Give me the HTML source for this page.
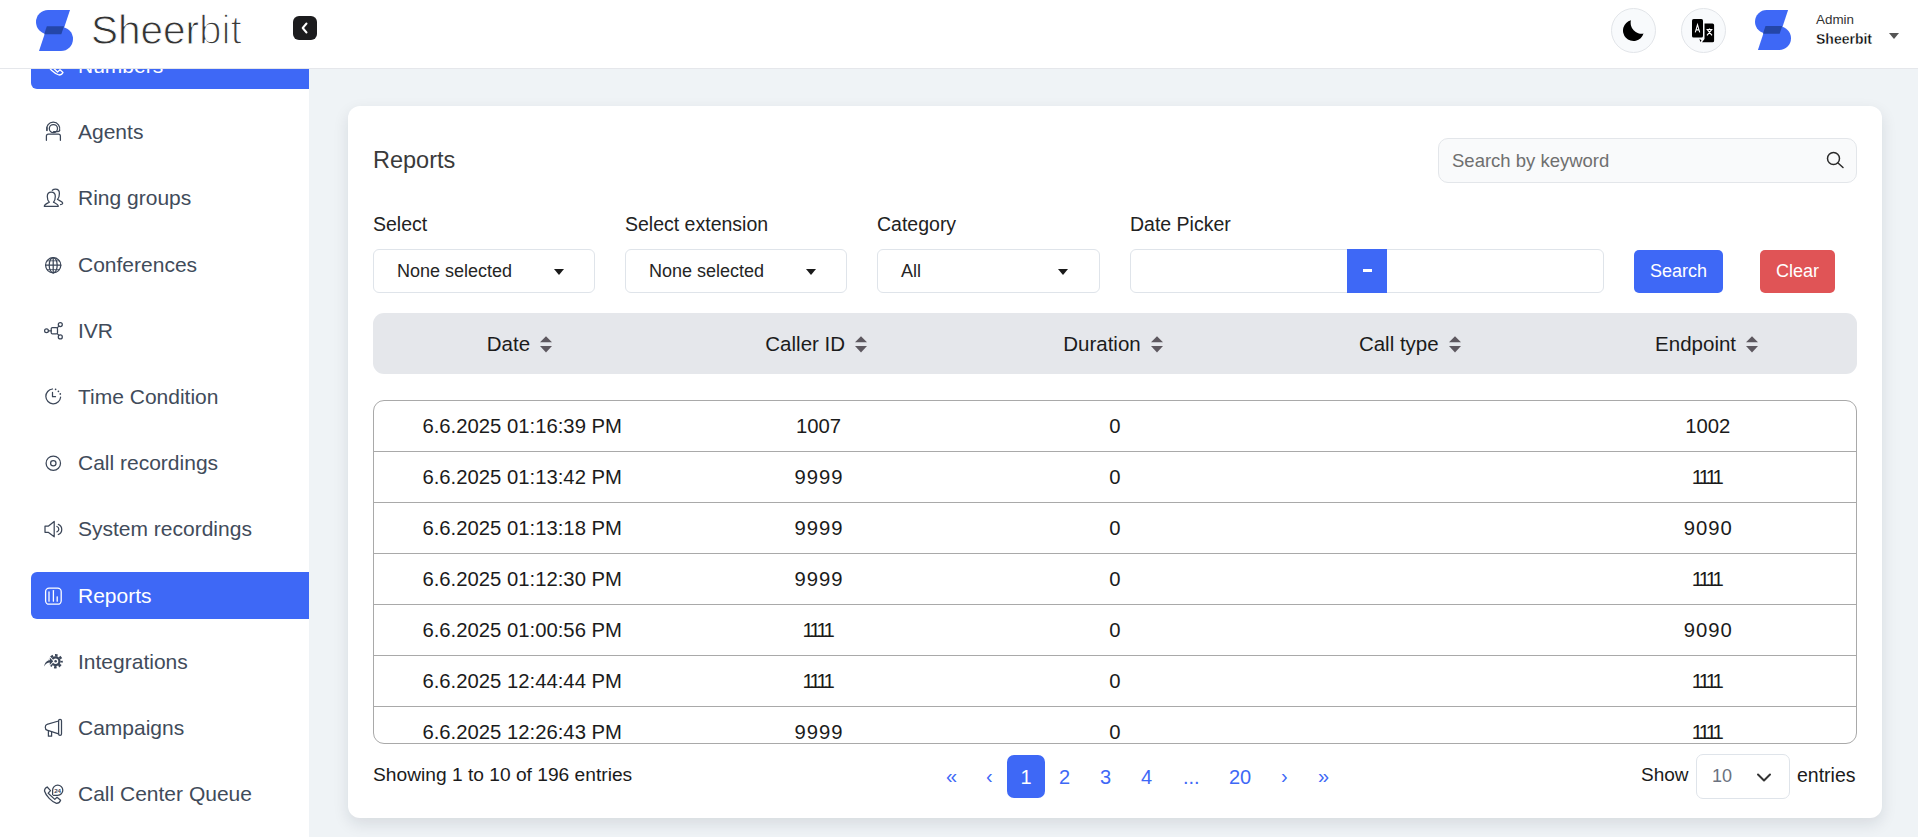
<!DOCTYPE html>
<html>
<head>
<meta charset="utf-8">
<style>
*{box-sizing:border-box;margin:0;padding:0}
html,body{width:1918px;height:837px;overflow:hidden}
body{background:#eff3f6;font-family:"Liberation Sans",sans-serif;position:relative;color:#1f1f1f}
.abs{position:absolute}
.t{position:absolute;white-space:pre;line-height:20px}
#hdr{position:absolute;left:0;top:0;width:1918px;height:69px;background:#fff;border-bottom:1px solid #e5e7eb;z-index:5}
#side{position:absolute;left:0;top:0;width:309px;height:837px;background:#fff;overflow:hidden}
.mi{position:absolute;left:31px;width:278px;height:47px;border-radius:6px 0 0 6px}
.mi.act{background:#3e68f6}
.mi .lbl{position:absolute;left:47px;top:0;line-height:47px;font-size:21px;color:#414b5a;white-space:pre}
.mi.act .lbl{color:#fff}
.mi svg{position:absolute}
#card{position:absolute;left:348px;top:106px;width:1534px;height:712px;background:#fff;border-radius:12px;box-shadow:0 6px 16px rgba(20,30,50,.11)}
.inp{position:absolute;border:1px solid #dfe4ea;border-radius:6px;background:#fff}
.lab{position:absolute;font-size:19.5px;line-height:20px;color:#222;white-space:pre}
.sel .v{position:absolute;left:23px;top:0;line-height:42px;font-size:18px;color:#252525;white-space:pre}
.sel .car{position:absolute;left:180px;top:19px;width:0;height:0;border-left:5.5px solid transparent;border-right:5.5px solid transparent;border-top:6px solid #1a1a1a}
.btn{position:absolute;top:250px;height:43px;border-radius:5px;color:#fff;font-size:18px;line-height:43px;text-align:center}
#thead{position:absolute;left:373px;top:313px;width:1484px;height:61px;background:#e5e7eb;border-radius:11px}
.th{position:absolute;top:0;margin-left:-2px;width:296.8px;height:61px;display:flex;align-items:center;justify-content:center;font-size:20.5px;color:#1b1b1b}
.th svg{margin-left:10px;width:12px;height:17px;margin-top:1px}
#tbody{position:absolute;left:373px;top:400px;width:1484px;height:344px;border:1px solid #a9a9a9;border-radius:11px;overflow:hidden}
.tr{position:absolute;left:0;width:1482px;height:51px;border-bottom:1px solid #a9a9a9}
.td{position:absolute;top:0;width:296.4px;line-height:50px;text-align:center;font-size:20.3px;color:#1b1b1b;white-space:pre}
.pg{position:absolute;top:755px;height:43px;line-height:43px;font-size:20px;color:#3e68f6;text-align:center}
</style>
</head>
<body>
<div id="hdr">
  <svg class="abs" style="left:34px;top:8px" width="42" height="46" viewBox="34 8 42 46">
    <path fill="#3e68f6" d="M48,10 H70 L62,34 H48 A12,12 0 0 1 48,10 Z"/>
    <path fill="#3e68f6" d="M39,51 L47,27 H61 A12,12 0 0 1 61,51 Z"/>
    <path fill="#2446a8" d="M46.8,26.3 H64 L61.3,34.3 H44.2 Z"/>
  </svg>
  <div class="t" style="left:91px;top:10px;line-height:40px;font-size:40.5px;color:#333;-webkit-text-stroke:0.9px #fff">Sheer<span style="color:#3a3a3a;-webkit-text-stroke:1.4px #fff">bit</span></div>
  <div class="abs" style="left:293px;top:16px;width:24px;height:24px;border-radius:6px;background:#1c1c1e"></div>
  <svg class="abs" style="left:298px;top:20px" width="14" height="16" viewBox="0 0 14 16" fill="none" stroke="#fff" stroke-width="2" stroke-linecap="round" stroke-linejoin="round"><path d="M8.5 3.5l-3.8 4.5l3.8 4.5"/></svg>
  <div class="abs" style="left:1611px;top:8px;width:45px;height:45px;border-radius:50%;background:#f8fafc;border:1px solid #e2e5e9"></div>
  <svg class="abs" style="left:1621px;top:18px" width="26" height="26" viewBox="0 0 26 26"><path fill="#000" d="M9.93 2.32A10.5 10.5 0 1 0 22.53 15.61A10.98 10.98 0 0 1 9.93 2.32Z"/></svg>
  <div class="abs" style="left:1681px;top:8px;width:45px;height:45px;border-radius:50%;background:#f8fafc;border:1px solid #e2e5e9"></div>
  <svg class="abs" style="left:1691px;top:18px" width="26" height="26" viewBox="0 0 26 26">
    <rect x="1" y="1" width="11" height="18.5" rx="1.6" fill="#000"/>
    <path d="M13.5 5.5h8a1.6 1.6 0 0 1 1.6 1.6v15.6a1.6 1.6 0 0 1 -1.6 1.6h-10.5l2.5-3.3z" fill="#000"/>
    <path d="M8.5 20.8l2 1.8l-1.3 1.5z" fill="#000"/>
    <path d="M4.3 14.3l2.2-7.6l2.2 7.6M5 11.9h3" stroke="#fff" stroke-width="1.1" fill="none"/>
    <path d="M15.5 11.5h6M18.5 10.5v1.2M16.5 11.8l4.5 5.5M20.5 11.8l-4.5 5.5" stroke="#fff" stroke-width="1.2" fill="none"/>
  </svg>
  <svg class="abs" style="left:1755px;top:10px" width="36" height="40" viewBox="36 10 37 41">
    <path fill="#3e68f6" d="M48,10 H70 L62,34 H48 A12,12 0 0 1 48,10 Z"/>
    <path fill="#3e68f6" d="M39,51 L47,27 H61 A12,12 0 0 1 61,51 Z"/>
    <path fill="#2446a8" d="M46.8,26.3 H64 L61.3,34.3 H44.2 Z"/>
  </svg>
  <div class="t" style="left:1816px;top:9.5px;font-size:13.4px;color:#333">Admin</div>
  <div class="t" style="left:1816px;top:28.5px;font-size:14px;font-weight:700;color:#000;-webkit-text-stroke:0.35px #fff">Sheerbit</div>
  <div class="abs" style="left:1889px;top:33px;width:0;height:0;border-left:5.5px solid transparent;border-right:5.5px solid transparent;border-top:6px solid #555"></div>
</div>
<div id="side">
<div class="mi act" style="top:42.0px"><svg viewBox="0 0 24 24" style="left:10px;top:11.0px;width:24px;height:24px"><g fill="none" stroke="#fff" stroke-width="1.3" stroke-linecap="round" stroke-linejoin="round"><path d="M8.5 6 L12 9.6 L9.5 12.2 L16.5 19 L19 16.8 L22 19.5 C21.3 21 20 22 18 22 C13 20.5 7 15 5.5 10 C5.4 8.5 6.5 6.8 8.5 6 Z"/></g></svg><div class="lbl">Numbers</div></div>
<div class="mi" style="top:108.2px"><svg viewBox="0 0 24 24" style="left:10px;top:11.0px;width:24px;height:24px"><g fill="none" stroke="#3b4658" stroke-width="1.25" stroke-linecap="round" stroke-linejoin="round"><circle cx="12.4" cy="9.6" r="4.1"/><path d="M5.8 11.3 A6.6 6.6 0 1 1 18.6 11.5"/><path d="M18.6 11.5 C18.3 12.4 17.5 12.6 16.4 12.6 H12.6"/><path d="M6 11.5 v-2.8"/><path d="M5.4 21.3 V17.2 A2 2 0 0 1 7.4 15.2 H17.4 A2 2 0 0 1 19.4 17.2 V21.3"/></g></svg><div class="lbl">Agents</div></div>
<div class="mi" style="top:174.4px"><svg viewBox="0 0 24 24" style="left:10px;top:11.0px;width:24px;height:24px"><g fill="none" stroke="#3b4658" stroke-width="1.25" stroke-linecap="round" stroke-linejoin="round"><path d="M3.3 21.3 C3.3 19.5 6 18.5 8.3 17.2 C6.8 15.8 6.3 13.5 6.3 11.5 C6.3 8.8 8 7.2 10.3 7.2 C12.8 7.2 14.3 9 14.3 11.5 C14.3 13.5 13.8 15.8 12.5 17.2 C15 18.5 17.3 19.5 17.3 21.3 Z"/><path d="M11.3 5.3 C12.2 4.5 13.4 4.2 14.6 4.2 C17 4.2 18.4 6 18.4 8.5 C18.4 11 17.8 13.3 16.5 14.5 C19 15.8 21.7 16.5 21.7 18.3 C21.7 19 20.5 19.5 19.5 19.5"/></g></svg><div class="lbl">Ring groups</div></div>
<div class="mi" style="top:240.6px"><svg viewBox="0 0 24 24" style="left:10px;top:11.0px;width:24px;height:24px"><g fill="none" stroke="#3b4658" stroke-width="1.25" stroke-linecap="round" stroke-linejoin="round"><circle cx="12.2" cy="13.2" r="7.6"/><path d="M4.6 13.2 H19.8"/><path d="M12.2 5.6 V20.8"/><ellipse cx="12.2" cy="13.2" rx="4" ry="7.6"/><path d="M6 8.8 H18.4 M6 17.6 H18.4" stroke-width="0.8"/></g></svg><div class="lbl">Conferences</div></div>
<div class="mi" style="top:306.8px"><svg viewBox="0 0 24 24" style="left:10px;top:11.0px;width:24px;height:24px"><g fill="none" stroke="#3b4658" stroke-width="1.25" stroke-linecap="round" stroke-linejoin="round" stroke-width="1.4"><circle cx="5.5" cy="12.8" r="1.9"/><rect x="10.2" y="9.6" width="6.3" height="6.3" rx="1.2"/><circle cx="19.3" cy="6.5" r="2"/><circle cx="19.3" cy="18.9" r="2"/><path d="M7.4 12.8 H10.2"/><path d="M16.5 9.6 L17.8 8.1"/><path d="M16.5 15.9 L17.8 17.3"/></g></svg><div class="lbl">IVR</div></div>
<div class="mi" style="top:373.0px"><svg viewBox="0 0 24 24" style="left:10px;top:11.0px;width:24px;height:24px"><g fill="none" stroke="#3b4658" stroke-width="1.25" stroke-linecap="round" stroke-linejoin="round" stroke-width="1.35"><path d="M11.5 5 A7.4 7.4 0 1 0 19.6 13.2"/><path d="M14.6 5.3 v.01 M17.4 7.3 v.01 M19.3 9.9 v.01" stroke-width="1.7"/><path d="M11.5 8.4 V12.7 H14.5"/></g></svg><div class="lbl">Time Condition</div></div>
<div class="mi" style="top:439.2px"><svg viewBox="0 0 24 24" style="left:10px;top:11.0px;width:24px;height:24px"><g fill="none" stroke="#3b4658" stroke-width="1.25" stroke-linecap="round" stroke-linejoin="round"><circle cx="12.3" cy="13.2" r="7.2"/><circle cx="12.3" cy="13.2" r="2.7"/></g></svg><div class="lbl">Call recordings</div></div>
<div class="mi" style="top:505.4px"><svg viewBox="0 0 24 24" style="left:10px;top:11.0px;width:24px;height:24px"><g fill="none" stroke="#3b4658" stroke-width="1.25" stroke-linecap="round" stroke-linejoin="round"><path d="M4 10.2 H7.2 L13.2 5.4 V20.8 L7.2 16.3 H4 Z"/><path d="M15.9 10.5 A2.8 2.8 0 0 1 15.9 15.8"/><path d="M17.3 8.3 A5.5 5.5 0 0 1 17.3 18.5"/></g></svg><div class="lbl">System recordings</div></div>
<div class="mi act" style="top:571.6px"><svg viewBox="0 0 24 24" style="left:10px;top:11.0px;width:24px;height:24px"><g fill="none" stroke="#fff" stroke-width="1.3" stroke-linecap="round" stroke-linejoin="round"><rect x="4.6" y="5.2" width="15.6" height="16" rx="3.5"/><path d="M8 8.9 V18.2"/><path d="M12.4 7.6 V18.2"/><path d="M16.2 13.8 V18.2"/></g></svg><div class="lbl">Reports</div></div>
<div class="mi" style="top:637.8px"><svg viewBox="0 0 24 24" style="left:10px;top:11.0px;width:24px;height:24px"><g><circle cx="14.6" cy="12.2" r="3.85" fill="none" stroke="#3b4658" stroke-width="2.3"/><circle cx="14.6" cy="12.2" r="6" fill="none" stroke="#3b4658" stroke-width="2.4" stroke-dasharray="2.6 2.112" stroke-dashoffset="1.3"/><circle cx="14.6" cy="12.2" r="1.3" fill="#3b4658"/><path d="M3 17.5 C3.8 13.5 6 11.2 8.8 11.2 V8.6 L12.2 12.3 L8.8 16 V13.6 C6.5 13.6 4.5 15 3 17.5 Z" fill="#3b4658" stroke="#fff" stroke-width="1.8" paint-order="stroke"/></g></svg><div class="lbl">Integrations</div></div>
<div class="mi" style="top:704.0px"><svg viewBox="0 0 24 24" style="left:10px;top:11.0px;width:24px;height:24px"><g fill="none" stroke="#3b4658" stroke-width="1.25" stroke-linecap="round" stroke-linejoin="round"><path d="M17.6 6 L6 9.3 C4.8 9.6 4.3 10.8 4.3 12.3 C4.3 13.8 4.8 14.9 6 15.2 L17.6 18.8"/><rect x="17.6" y="4.4" width="2.9" height="16" rx="1.4"/><path d="M7.4 15.8 V21.2 H10.6 V16.8"/></g></svg><div class="lbl">Campaigns</div></div>
<div class="mi" style="top:770.2px"><svg viewBox="0 0 24 24" style="left:10px;top:11.0px;width:24px;height:24px"><g fill="none" stroke="#3b4658" stroke-width="1.25" stroke-linecap="round" stroke-linejoin="round"><path d="M6.2 6 L9.5 9.6 L7.2 12.2 L13.8 18.4 L16 16.3 L19.6 19.3 C19 21 17.6 22.4 15.5 22.4 C10.5 20.5 5 15 3.5 10 C3.4 8.5 4.5 6.8 6.2 6 Z"/><path d="M11.6 13.5 V9.2 A5.1 5.1 0 1 1 16.7 14.3 H12.5"/><text x="16.6" y="11.6" font-size="6.2" font-family="Liberation Sans" font-weight="700" text-anchor="middle" fill="#3b4658" stroke="none">24</text></g></svg><div class="lbl">Call Center Queue</div></div>
</div>
<div id="card"></div>

<div class="t" style="left:373px;top:150px;font-size:23.5px;color:#3a3a3a">Reports</div>
<div class="inp" style="left:1438px;top:138px;width:419px;height:45px;border-radius:10px;background:#f9fafb;border-color:#e3e6ea"></div>
<div class="t" style="left:1452px;top:151px;font-size:18.5px;color:#6f6f6f">Search by keyword</div>
<svg class="abs" style="left:1825px;top:150px" width="20" height="20" viewBox="0 0 20 20" fill="none" stroke="#2a2a2a" stroke-width="1.5" stroke-linecap="round"><circle cx="8.5" cy="8.5" r="6"/><path d="M13 13l5 4.5"/></svg>

<div class="lab" style="left:373px;top:214px">Select</div>
<div class="lab" style="left:625px;top:214px">Select extension</div>
<div class="lab" style="left:877px;top:214px">Category</div>
<div class="lab" style="left:1130px;top:214px">Date Picker</div>

<div class="inp sel" style="left:373px;top:249px;width:222px;height:44px"><div class="v">None selected</div><div class="car"></div></div>
<div class="inp sel" style="left:625px;top:249px;width:222px;height:44px"><div class="v">None selected</div><div class="car"></div></div>
<div class="inp sel" style="left:877px;top:249px;width:223px;height:44px"><div class="v">All</div><div class="car"></div></div>

<div class="inp" style="left:1130px;top:249px;width:474px;height:44px"></div>
<div class="abs" style="left:1347px;top:249px;width:40px;height:44px;background:#3e68f6"></div>
<div class="abs" style="left:1362.5px;top:269px;width:9px;height:3px;background:#fff"></div>

<div class="btn" style="left:1634px;width:89px;background:#3e68f6">Search</div>
<div class="btn" style="left:1760px;width:75px;background:#e05456">Clear</div>

<div id="thead"><div class="th" style="left:0.0px">Date<svg viewBox="0 0 12 17"><path d="M6 0.2L12 6.3H0z" fill="#5d585f"/><path d="M0 10H12L6 16.5z" fill="#5d585f"/></svg></div><div class="th" style="left:296.8px">Caller ID<svg viewBox="0 0 12 17"><path d="M6 0.2L12 6.3H0z" fill="#5d585f"/><path d="M0 10H12L6 16.5z" fill="#5d585f"/></svg></div><div class="th" style="left:593.6px">Duration<svg viewBox="0 0 12 17"><path d="M6 0.2L12 6.3H0z" fill="#5d585f"/><path d="M0 10H12L6 16.5z" fill="#5d585f"/></svg></div><div class="th" style="left:890.4px">Call type<svg viewBox="0 0 12 17"><path d="M6 0.2L12 6.3H0z" fill="#5d585f"/><path d="M0 10H12L6 16.5z" fill="#5d585f"/></svg></div><div class="th" style="left:1187.2px">Endpoint<svg viewBox="0 0 12 17"><path d="M6 0.2L12 6.3H0z" fill="#5d585f"/><path d="M0 10H12L6 16.5z" fill="#5d585f"/></svg></div></div>
<div id="tbody">
<div class="tr" style="top:0px"><div class="td" style="left:0.0px">6.6.2025 01:16:39 PM</div><div class="td" style="left:296.4px">1007</div><div class="td" style="left:592.8px">0</div><div class="td" style="left:889.2px"></div><div class="td" style="left:1185.6px">1002</div></div>
<div class="tr" style="top:51px"><div class="td" style="left:0.0px">6.6.2025 01:13:42 PM</div><div class="td" style="left:296.4px"><span style="letter-spacing:1.0px;margin-right:-1.0px">9999</span></div><div class="td" style="left:592.8px">0</div><div class="td" style="left:889.2px"></div><div class="td" style="left:1185.6px"><span style="letter-spacing:-2.8px;margin-right:2.8px">1111</span></div></div>
<div class="tr" style="top:102px"><div class="td" style="left:0.0px">6.6.2025 01:13:18 PM</div><div class="td" style="left:296.4px"><span style="letter-spacing:1.0px;margin-right:-1.0px">9999</span></div><div class="td" style="left:592.8px">0</div><div class="td" style="left:889.2px"></div><div class="td" style="left:1185.6px"><span style="letter-spacing:1.0px;margin-right:-1.0px">9090</span></div></div>
<div class="tr" style="top:153px"><div class="td" style="left:0.0px">6.6.2025 01:12:30 PM</div><div class="td" style="left:296.4px"><span style="letter-spacing:1.0px;margin-right:-1.0px">9999</span></div><div class="td" style="left:592.8px">0</div><div class="td" style="left:889.2px"></div><div class="td" style="left:1185.6px"><span style="letter-spacing:-2.8px;margin-right:2.8px">1111</span></div></div>
<div class="tr" style="top:204px"><div class="td" style="left:0.0px">6.6.2025 01:00:56 PM</div><div class="td" style="left:296.4px"><span style="letter-spacing:-2.8px;margin-right:2.8px">1111</span></div><div class="td" style="left:592.8px">0</div><div class="td" style="left:889.2px"></div><div class="td" style="left:1185.6px"><span style="letter-spacing:1.0px;margin-right:-1.0px">9090</span></div></div>
<div class="tr" style="top:255px"><div class="td" style="left:0.0px">6.6.2025 12:44:44 PM</div><div class="td" style="left:296.4px"><span style="letter-spacing:-2.8px;margin-right:2.8px">1111</span></div><div class="td" style="left:592.8px">0</div><div class="td" style="left:889.2px"></div><div class="td" style="left:1185.6px"><span style="letter-spacing:-2.8px;margin-right:2.8px">1111</span></div></div>
<div class="tr" style="top:306px"><div class="td" style="left:0.0px">6.6.2025 12:26:43 PM</div><div class="td" style="left:296.4px"><span style="letter-spacing:1.0px;margin-right:-1.0px">9999</span></div><div class="td" style="left:592.8px">0</div><div class="td" style="left:889.2px"></div><div class="td" style="left:1185.6px"><span style="letter-spacing:-2.8px;margin-right:2.8px">1111</span></div></div>
</div>

<div class="t" style="left:373px;top:765px;font-size:19.2px;color:#1b1b1b">Showing 1 to 10 of 196 entries</div>
<div class="abs" style="left:1007px;top:755px;width:38px;height:43px;border-radius:7px;background:#3e68f6"></div>
<div class="t" style="left:1007px;top:766.5px;width:38px;text-align:center;font-size:20px;color:#fff">1</div>
<div class="t" style="left:946px;top:766px;font-size:20px;color:#3e68f6">«</div>
<div class="t" style="left:986px;top:766px;font-size:20px;color:#3e68f6">‹</div>
<div class="t" style="left:1059px;top:766.5px;font-size:20px;color:#3e68f6">2</div>
<div class="t" style="left:1100px;top:766.5px;font-size:20px;color:#3e68f6">3</div>
<div class="t" style="left:1141px;top:766.5px;font-size:20px;color:#3e68f6">4</div>
<div class="t" style="left:1183px;top:766.5px;font-size:20px;color:#3e68f6">...</div>
<div class="t" style="left:1229px;top:766.5px;font-size:20px;color:#3e68f6">20</div>
<div class="t" style="left:1281px;top:766px;font-size:20px;color:#3e68f6">›</div>
<div class="t" style="left:1318px;top:766px;font-size:20px;color:#3e68f6">»</div>

<div class="t" style="left:1641px;top:765px;font-size:19px;color:#1b1b1b">Show</div>
<div class="inp" style="left:1696px;top:754px;width:94px;height:45px;border-radius:7px"></div>
<div class="t" style="left:1712px;top:766px;font-size:18px;color:#6b7280">10</div>
<svg class="abs" style="left:1756px;top:772px" width="16" height="11" viewBox="0 0 16 11" fill="none" stroke="#333" stroke-width="2" stroke-linecap="round" stroke-linejoin="round"><path d="M2 2.5l6 6l6 -6"/></svg>
<div class="t" style="left:1797px;top:765px;font-size:19.5px;color:#1b1b1b">entries</div>


</body>
</html>
